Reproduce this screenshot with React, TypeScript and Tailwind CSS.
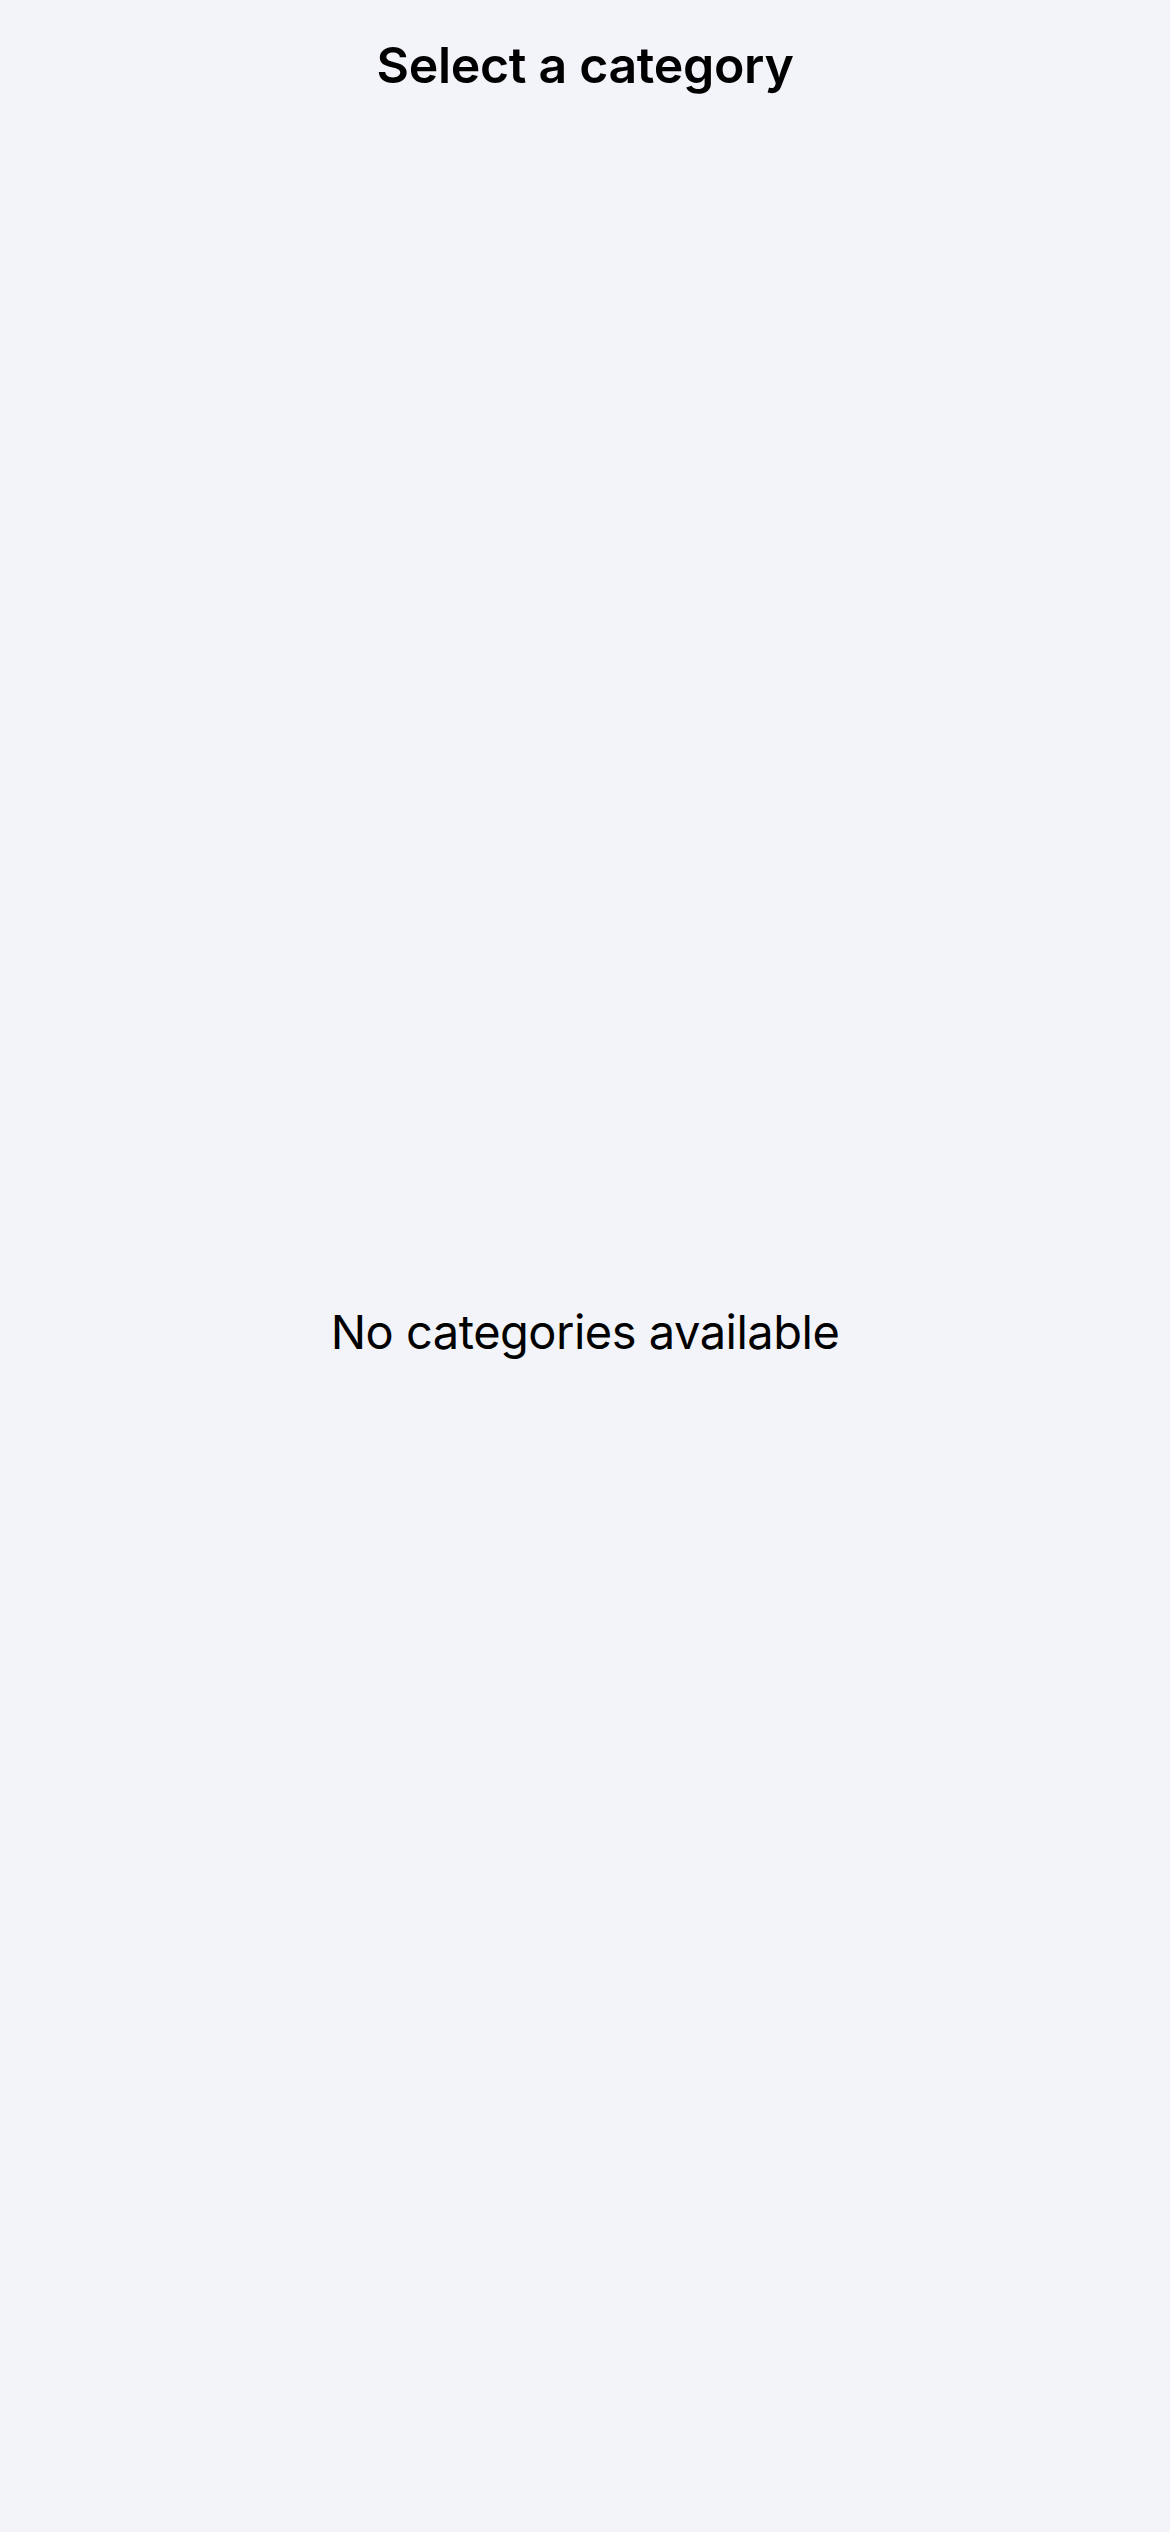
export default function App() {
  return (
    <div className="flex h-screen w-full flex-col bg-[#f2f4f9] text-black" style={{ fontFamily: 'Inter, "Noto Sans", sans-serif' }}>
      <header className="flex h-[130px] shrink-0 items-center justify-center">
        <h1 className="text-[50px] font-semibold leading-none tracking-[-0.3px]">Select a category</h1>
      </header>
      <main className="flex flex-1 items-center justify-center">
        <p className="text-[47px] font-normal leading-none tracking-[-0.5px]">No categories available</p>
      </main>
    </div>
  );
}
